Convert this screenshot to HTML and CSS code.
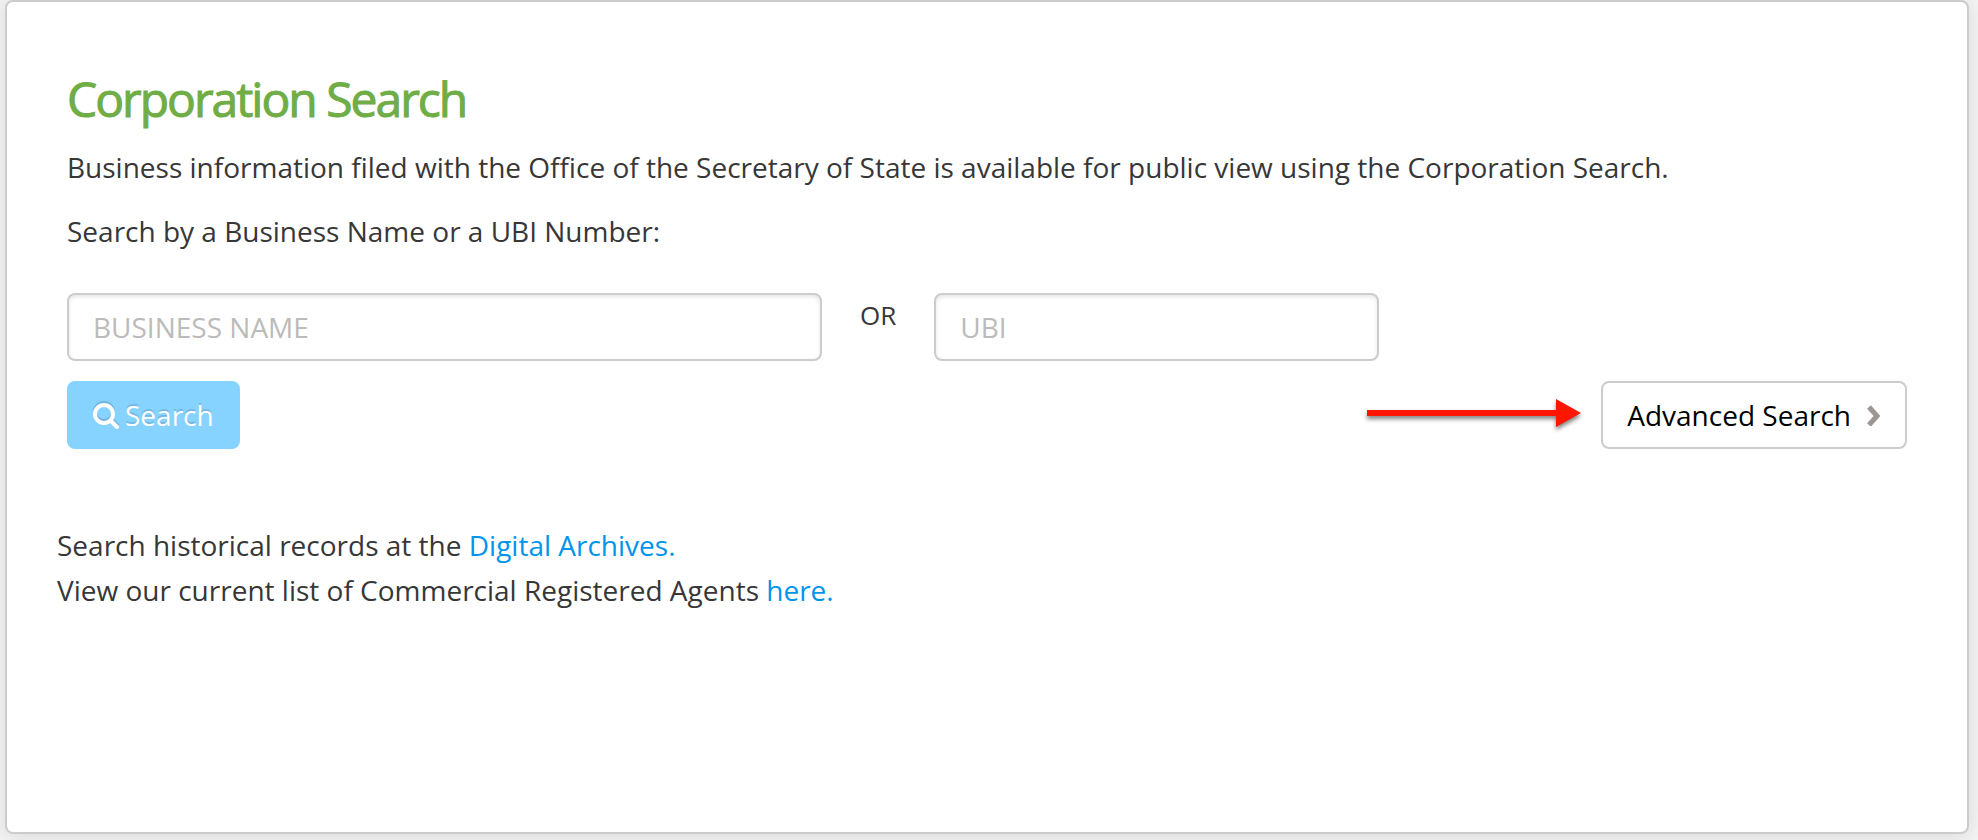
FILE: index.html
```
<!DOCTYPE html>
<html lang="en">
<head>
    <meta charset="utf-8">
    <title>Corporation Search</title>
    <link rel="stylesheet" href="styles.css">
</head>
<body>
<main class="panel">
    <h1>Corporation Search</h1>
    <p class="intro">Business information filed with the Office of the Secretary of State is available for public view using the Corporation Search.</p>
    <p class="prompt">Search by a Business Name or a UBI Number:</p>
    <form class="search-form">
        <div class="fields">
            <input class="field field-name" type="text" placeholder="BUSINESS NAME" aria-label="Business name">
            <span class="or">OR</span>
            <input class="field field-ubi" type="text" placeholder="UBI" aria-label="UBI number">
        </div>
        <div class="actions">
            <button class="btn btn-search" type="submit" disabled>
                <svg class="icon-search" viewBox="0 0 26 28" aria-hidden="true">
                    <circle cx="11" cy="13" r="9"/>
                    <path d="M18 20l6 6"/>
                </svg>
                Search
            </button>
            <svg class="arrow" viewBox="0 0 214 30" aria-hidden="true">
                <path d="M0 12h189V1l25 14-25 14V18H0z"/>
            </svg>
            <button class="btn btn-advanced" type="button">
                Advanced Search
                <svg class="icon-chevron" viewBox="0 0 14 22" aria-hidden="true">
                    <path d="M2 3l8 9-8 9"/>
                </svg>
            </button>
        </div>
    </form>
    <div class="links">
        <p>Search historical records at the <a href="#">Digital Archives.</a></p>
        <p>View our current list of Commercial Registered Agents <a href="#">here.</a></p>
    </div>
</main>
</body>
</html>
```
FILE: styles.css
```
* {
    box-sizing: border-box;
}
body {
    margin: 0;
    padding: 0 9px 6px 5px;
    min-height: 100vh;
    display: flex;
    background-color: #f3f3f3;
    font-family: "Open Sans", "Noto Sans", sans-serif;
    font-size: 28px;
    line-height: 45px;
    color: #373737;
}
.panel {
    flex: 1;
    padding: 65px 60px 60px;
    background-color: #fff;
    border: 2px solid #ccc;
    border-radius: 8px;
    box-shadow: 0 2px 20px rgba(0, 0, 0, 0.1);
}
h1 {
    margin: 0 0 14px;
    font-size: 48px;
    font-weight: 400;
    line-height: 64px;
    letter-spacing: -2px;
    color: #70ad47;
    -webkit-text-stroke: 1px #70ad47;
}
p {
    margin: 0;
}
.prompt {
    margin-top: 19px;
}
.fields {
    display: flex;
    margin-top: 39px;
}
.field {
    height: 68px;
    padding: 0 24px;
    border: 2px solid #ccc;
    border-radius: 8px;
    box-shadow: inset 0 2px 4px rgba(0, 0, 0, 0.1);
    background-color: #fff;
    font: inherit;
    color: #373737;
}
.field::placeholder {
    color: #bbb;
    opacity: 1;
}
.field-name {
    width: 755px;
}
.field-ubi {
    width: 445px;
}
.or {
    padding: 0 38px;
    font-size: 26px;
}
.actions {
    display: flex;
    align-items: center;
    margin-top: 20px;
}
.btn {
    display: flex;
    align-items: center;
    height: 68px;
    padding: 0 24px;
    border: 2px solid #ccc;
    border-radius: 8px;
    background-color: #fff;
    font: inherit;
    color: #000;
}
.btn-search {
    gap: 6px;
    border-color: #87d3ff;
    background-color: #87d3ff;
    color: #fff;
    text-shadow: 0 -2px 0 rgba(0, 0, 0, 0.15);
}
.btn-advanced {
    gap: 16px;
}
.icon-search {
    width: 26px;
    height: 28px;
    fill: none;
    stroke: #fff;
    stroke-width: 4;
    stroke-linecap: round;
    overflow: visible;
    filter: drop-shadow(0 -2px 0 rgba(0, 0, 0, 0.15));
}
.icon-chevron {
    width: 14px;
    height: 22px;
    fill: none;
    stroke: #9e9595;
    stroke-width: 5;
}
.arrow {
    width: 214px;
    height: 30px;
    margin: 0 20px 4px auto;
    overflow: visible;
    fill: #ff1500;
    filter: drop-shadow(0 3px 2px rgba(0, 0, 0, 0.5));
}
.links {
    margin: 74px 0 0 -10px;
}
a {
    color: #0095eb;
    text-decoration: none;
}
```
